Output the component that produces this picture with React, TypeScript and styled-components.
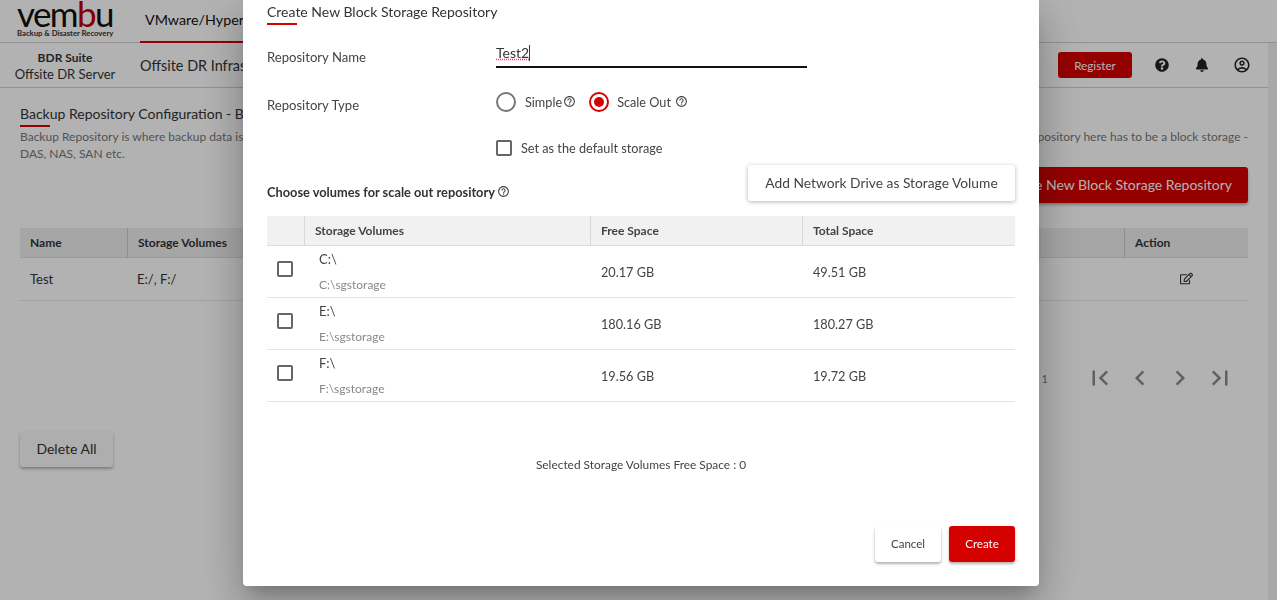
import React from "react";
import styled, { createGlobalStyle } from "styled-components";
import { FaBell, FaQuestionCircle, FaRegEdit } from "react-icons/fa";
import {
	MdChevronLeft,
	MdChevronRight,
	MdFirstPage,
	MdHelpOutline,
	MdLastPage,
	MdOutlineAccountCircle,
} from "react-icons/md";

const Global = createGlobalStyle`
	html, body { margin: 0; height: 100%; overflow: hidden; background: #fff; }
	body { font-family: Lato, "Liberation Sans", sans-serif; color: #333; }
	* { box-sizing: border-box; }
`;

const Page = styled.div`
	width: 1277px;
	height: 600px;
	display: flex;
	flex-direction: column;
	overflow: hidden;
`;

const TopBar = styled.div`
	height: 43px;
	flex: none;
	display: flex;
	align-items: stretch;
	border-bottom: 1px solid #d0d0d0;
`;

const Logo = styled.div`
	width: 140px;
	padding: 0 0 0 17px;
	display: flex;
	flex-direction: column;
`;

const LogoWord = styled.div`
	font-size: 35px;
	line-height: 27px;
	height: 29px;
	font-weight: 400;
	color: #111;
	letter-spacing: -1.6px;
	white-space: nowrap;
	b {
		font-weight: 400;
		color: #c00000;
	}
`;

const LogoTag = styled.div`
	font-size: 7.7px;
	line-height: 9px;
	font-weight: 700;
	color: #333;
	white-space: nowrap;
`;

const TopTab = styled.div`
	width: 110px;
	padding: 0 5px;
	font-size: 14.3px;
	line-height: 40px;
	color: #111;
	border-bottom: 2px solid #d50000;
	height: 43px;
	white-space: nowrap;
`;

const Body = styled.div`
	flex: 1;
	display: flex;
	min-height: 0;
`;

const Main = styled.div`
	flex: 1;
	min-width: 0;
`;

const Track = styled.div`
	width: 9px;
	flex: none;
	background: #f1f1f1;
`;

const SubBar = styled.div`
	height: 45px;
	display: flex;
	align-items: center;
	border-bottom: 1px solid #d0d0d0;
	padding-right: 6px;
`;

const Brand = styled.div`
	width: 130px;
	text-align: center;
	font-size: 13px;
	line-height: 17px;
	strong {
		display: block;
		font-size: 12px;
		padding-top: 1px;
	}
`;

const SubLink = styled.div`
	margin-left: 10px;
	font-size: 14.4px;
	color: #333;
	margin-right: auto;
`;

const Register = styled.div`
	width: 74px;
	height: 26px;
	margin-right: 10px;
	border-radius: 3px;
	background: #d50000;
	color: #fff;
	font-size: 11.7px;
	line-height: 26px;
	text-align: center;
`;

const TopIcon = styled.span`
	width: 40px;
	display: flex;
	justify-content: center;
	color: #222;
	font-size: 14px;
`;

const Content = styled.div`
	padding: 17px 20px 0;
`;

const PageTitle = styled.div`
	font-size: 14px;
	line-height: 18px;
	color: #333;
	&::after {
		content: "";
		display: block;
		width: 30px;
		height: 2px;
		margin-top: 2px;
		background: #d50000;
	}
`;

const Desc = styled.div`
	margin-top: 1px;
	font-size: 12px;
	line-height: 17px;
	color: #777;
	div {
		display: flex;
		justify-content: space-between;
	}
`;

const ActionRow = styled.div`
	display: flex;
	justify-content: flex-end;
	margin-top: 5px;
`;

const PrimaryBig = styled.div`
	width: 340px;
	height: 36px;
	padding-right: 16px;
	border-radius: 3px;
	background: #d50000;
	color: #fff;
	font-size: 14px;
	line-height: 36px;
	text-align: right;
	box-shadow: 0 2px 3px rgba(0, 0, 0, 0.3);
`;

const BackTable = styled.div`
	margin-top: 25px;
	display: grid;
	grid-template-columns: 107px 200px 1fr 124px;
`;

const BackHead = styled.div`
	height: 30px;
	padding-left: 10px;
	background: #eee;
	font-size: 12px;
	font-weight: 700;
	line-height: 29px;
	color: #333;
	border-bottom: 1px solid #ddd;
	& + & {
		border-left: 1px solid #ccc;
	}
`;

const BackCell = styled.div`
	height: 43px;
	padding-left: 10px;
	font-size: 13px;
	line-height: 43px;
	border-bottom: 1px solid #e6e6e6;
	svg {
		margin-left: 46px;
		vertical-align: -1px;
	}
`;

const Pager = styled.div`
	display: flex;
	align-items: center;
	justify-content: flex-end;
	margin-top: 62px;
	padding-right: 13px;
	color: #8c8c8c;
	font-size: 30px;
	gap: 10px;
`;

const PagerCount = styled.span`
	font-size: 11px;
	margin-right: 27px;
	color: #777;
`;

const GhostBtn = styled.div`
	width: 93px;
	height: 36px;
	margin-top: 38px;
	border-radius: 3px;
	background: #fafafa;
	font-size: 14px;
	line-height: 36px;
	text-align: center;
	box-shadow: 0 2px 3px rgba(0, 0, 0, 0.3);
`;

const Overlay = styled.div`
	position: fixed;
	inset: 0;
	background: rgba(0, 0, 0, 0.3);
`;

const Modal = styled.div`
	position: fixed;
	left: 243px;
	top: 0;
	width: 796px;
	height: 586px;
	padding: 0 24px;
	display: flex;
	flex-direction: column;
	background: #fff;
	border-radius: 0 0 4px 4px;
	box-shadow: 0 11px 15px -7px rgba(0, 0, 0, 0.2), 0 24px 38px 3px rgba(0, 0, 0, 0.14),
		0 9px 46px 8px rgba(0, 0, 0, 0.12);
`;

const ModalTitle = styled.div`
	padding-top: 3px;
	font-size: 14px;
	line-height: 17px;
	color: #333;
	&::after {
		content: "";
		display: block;
		width: 30px;
		height: 2px;
		margin-top: 3px;
		background: #d50000;
	}
`;

const FormRow = styled.div<{ $h: number }>`
	height: ${(p) => p.$h}px;
	display: grid;
	grid-template-columns: 229px 1fr;
	align-items: center;
`;

const FieldLabel = styled.span`
	padding-top: 6px;
	font-size: 13.1px;
	color: #444;
`;

const TextField = styled.div`
	width: 311px;
	height: 28px;
	border-bottom: 2px solid #111;
	font-size: 14px;
	line-height: 25px;
	color: #333;
	span {
		display: inline-block;
		height: 16px;
		line-height: 16px;
		border-right: 1px solid #3a2a8a;
		text-decoration: underline dotted #e4406a;
	}
`;

const Choices = styled.div`
	display: flex;
	align-items: center;
`;

const Radio = styled.span<{ $on?: boolean }>`
	width: 20px;
	height: 20px;
	margin-right: ${(p) => (p.$on ? 8 : 9)}px;
	border-radius: 50%;
	border: 2px solid ${(p) => (p.$on ? "#d50000" : "#777")};
	display: flex;
	align-items: center;
	justify-content: center;
	&::after {
		content: "";
		width: 10px;
		height: 10px;
		border-radius: 50%;
		background: ${(p) => (p.$on ? "#d50000" : "transparent")};
	}
`;

const ChoiceText = styled.span`
	display: flex;
	align-items: center;
	gap: 1px;
	margin-right: 13px;
	font-size: 12.7px;
	color: #444;
	svg {
		font-size: 13px;
	}
`;

const Check = styled.span`
	display: block;
	width: 16px;
	height: 16px;
	border: 2px solid #666;
	border-radius: 2px;
`;

const RowCheck = styled(Check)`
	margin-top: -6px;
`;

const CheckLabel = styled.span`
	margin-left: 9px;
	font-size: 12.7px;
	color: #444;
`;

const VolumesBar = styled.div`
	height: 36px;
	margin-top: -9px;
	display: flex;
	align-items: center;
	justify-content: space-between;
`;

const VolumesTitle = styled.div`
	display: flex;
	align-items: center;
	gap: 2px;
	padding-top: 17px;
	font-size: 12.8px;
	font-weight: 700;
	color: #333;
	svg {
		font-size: 13px;
		color: #444;
	}
`;

const AddDrive = styled.div`
	width: 267px;
	height: 36px;
	border-radius: 3px;
	background: #fff;
	font-size: 13.8px;
	line-height: 36px;
	text-align: center;
	color: #444;
	box-shadow: 0 1px 4px rgba(0, 0, 0, 0.3);
`;

const VolumeTable = styled.div`
	margin-top: 15px;
	display: grid;
	grid-template-columns: 37px 286px 212px 213px;
`;

const HeadCell = styled.div`
	height: 30px;
	padding-left: 10px;
	background: #f1f1f1;
	border-bottom: 1px solid #ddd;
	font-size: 12px;
	font-weight: 700;
	line-height: 29px;
	color: #444;
	& + & {
		border-left: 1px solid #d8d8d8;
	}
`;

const Cell = styled.div`
	height: 52px;
	display: flex;
	flex-direction: column;
	justify-content: center;
	padding-left: 11px;
	border-bottom: 1px solid #e4e4e4;
	font-size: 12.7px;
	color: #444;
`;

const CheckCell = styled(Cell)`
	padding-left: 10px;
`;

const DriveCell = styled(Cell)`
	padding-left: 15px;
`;

const DriveName = styled.span`
	font-size: 13px;
	line-height: 17px;
	margin-top: -1px;
`;

const DrivePath = styled.span`
	margin-top: 10px;
	font-size: 12px;
	line-height: 14px;
	color: #888;
`;

const Selected = styled.div`
	margin-top: 56px;
	font-size: 11.9px;
	line-height: 14px;
	text-align: center;
	color: #444;
`;

const Footer = styled.div`
	margin-top: 54px;
	display: flex;
	justify-content: flex-end;
	gap: 8px;
`;

const FootBtn = styled.div<{ $primary?: boolean }>`
	width: 66px;
	height: 36px;
	border-radius: 3px;
	background: ${(p) => (p.$primary ? "#d50000" : "#fff")};
	color: ${(p) => (p.$primary ? "#fff" : "#444")};
	font-size: 11.5px;
	line-height: 36px;
	text-align: center;
	box-shadow: 0 2px 3px rgba(0, 0, 0, 0.3);
`;

const volumes = [
	{ name: "C:\\", path: "C:\\sgstorage", free: "20.17 GB", total: "49.51 GB" },
	{ name: "E:\\", path: "E:\\sgstorage", free: "180.16 GB", total: "180.27 GB" },
	{ name: "F:\\", path: "F:\\sgstorage", free: "19.56 GB", total: "19.72 GB" },
];

export default function App() {
	return (
		<Page>
			<Global />
			<TopBar>
				<Logo>
					<LogoWord>
						vem<b>b</b>u
					</LogoWord>
					<LogoTag>Backup &amp; Disaster Recovery</LogoTag>
				</Logo>
				<TopTab>VMware/Hyper-V</TopTab>
			</TopBar>
			<Body>
				<Main>
					<SubBar>
						<Brand>
							<strong>BDR Suite</strong>
							Offsite DR Server
						</Brand>
						<SubLink>Offsite DR Infrastructure</SubLink>
						<Register>Register</Register>
						<TopIcon>
							<FaQuestionCircle />
						</TopIcon>
						<TopIcon>
							<FaBell />
						</TopIcon>
						<TopIcon>
							<MdOutlineAccountCircle size={18} />
						</TopIcon>
					</SubBar>
					<Content>
						<PageTitle>Backup Repository Configuration - Block Storage</PageTitle>
						<Desc>
							<div>
								<span>Backup Repository is where backup data is stored.</span>
								<span>The repository here has to be a block storage -</span>
							</div>
							DAS, NAS, SAN etc.
						</Desc>
						<ActionRow>
							<PrimaryBig>Create New Block Storage Repository</PrimaryBig>
						</ActionRow>
						<BackTable>
							<BackHead>Name</BackHead>
							<BackHead>Storage Volumes</BackHead>
							<BackHead />
							<BackHead>Action</BackHead>
							<BackCell>Test</BackCell>
							<BackCell>E:/, F:/</BackCell>
							<BackCell />
							<BackCell>
								<FaRegEdit />
							</BackCell>
						</BackTable>
						<Pager>
							<PagerCount>1</PagerCount>
							<MdFirstPage />
							<MdChevronLeft />
							<MdChevronRight />
							<MdLastPage />
						</Pager>
						<GhostBtn>Delete All</GhostBtn>
					</Content>
				</Main>
				<Track />
			</Body>
			<Overlay />
			<Modal>
				<ModalTitle>Create New Block Storage Repository</ModalTitle>
				<FormRow $h={57}>
					<FieldLabel>Repository Name</FieldLabel>
					<TextField>
						<span>Test2</span>
					</TextField>
				</FormRow>
				<FormRow $h={39}>
					<FieldLabel>Repository Type</FieldLabel>
					<Choices>
						<Radio />
						<ChoiceText>
							Simple
							<MdHelpOutline />
						</ChoiceText>
						<Radio $on />
						<ChoiceText>
							Scale Out&nbsp;
							<MdHelpOutline />
						</ChoiceText>
					</Choices>
				</FormRow>
				<FormRow $h={53}>
					<span />
					<Choices>
						<Check />
						<CheckLabel>Set as the default storage</CheckLabel>
					</Choices>
				</FormRow>
				<VolumesBar>
					<VolumesTitle>
						Choose volumes for scale out repository
						<MdHelpOutline />
					</VolumesTitle>
					<AddDrive>Add Network Drive as Storage Volume</AddDrive>
				</VolumesBar>
				<VolumeTable>
					<HeadCell />
					<HeadCell>Storage Volumes</HeadCell>
					<HeadCell>Free Space</HeadCell>
					<HeadCell>Total Space</HeadCell>
					{volumes.map((v) => (
						<React.Fragment key={v.name}>
							<CheckCell>
								<RowCheck />
							</CheckCell>
							<DriveCell>
								<DriveName>{v.name}</DriveName>
								<DrivePath>{v.path}</DrivePath>
							</DriveCell>
							<Cell>{v.free}</Cell>
							<Cell>{v.total}</Cell>
						</React.Fragment>
					))}
				</VolumeTable>
				<Selected>Selected Storage Volumes Free Space : 0</Selected>
				<Footer>
					<FootBtn>Cancel</FootBtn>
					<FootBtn $primary>Create</FootBtn>
				</Footer>
			</Modal>
		</Page>
	);
}
